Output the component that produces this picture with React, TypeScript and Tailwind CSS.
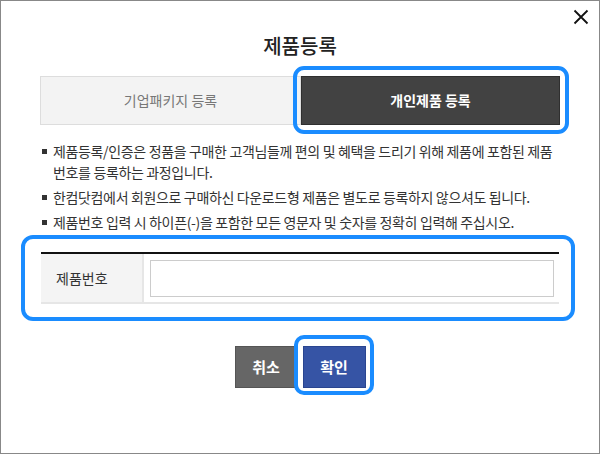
import React from "react";

const notes = [
  <>
    제품등록/인증은 정품을 구매한 고객님들께 편의 및 혜택을 드리기 위해 제품에 포함된 제품
    <br />
    번호를 등록하는 과정입니다.
  </>,
  <>한컴닷컴에서 회원으로 구매하신 다운로드형 제품은 별도로 등록하지 않으셔도 됩니다.</>,
  <>제품번호 입력 시 하이픈(-)을 포함한 모든 영문자 및 숫자를 정확히 입력해 주십시오.</>,
];

export default function App() {
  return (
    <div
      className="relative w-[600px] h-[454px] border border-[#888] bg-white text-[#333]"
      style={{ fontFamily: '"Noto Sans CJK KR", "Noto Sans", sans-serif' }}
    >
      {/* close */}
      <button className="absolute top-[7px] right-[9px] w-[18px] h-[18px] flex items-center justify-center">
        <svg viewBox="0 0 16 16" className="w-[16px] h-[16px]" stroke="#111" strokeWidth="1.8" fill="none">
          <path d="M1.5 1.5 L14.5 14.5 M14.5 1.5 L1.5 14.5" />
        </svg>
      </button>

      <h1 className="pt-[33px] text-center text-[20px] leading-[24px] font-medium text-[#222]">제품등록</h1>

      {/* tabs */}
      <div className="mt-[18px] px-[39px] flex">
        <button className="w-[261px] h-[49px] border border-[#ddd] bg-[#f3f3f3] text-[14px] text-[#777]">
          기업패키지 등록
        </button>
        <div className="relative">
          <button className="w-[259px] h-[49px] border border-[#2f2f2f] bg-[#424242] text-[14px] font-bold text-white">
            개인제품 등록
          </button>
          <span className="pointer-events-none absolute -left-[8px] -right-[9px] -top-[10px] -bottom-[9px] border-[4px] border-[#1a8cff] rounded-[11px]" />
        </div>
      </div>

      {/* notes */}
      <ul className="mt-[16px] pl-[41px] pr-[20px] flex flex-col gap-[4px] text-[14px] leading-[21px] tracking-[-0.35px] text-[#333]">
        {notes.map((n, i) => (
          <li key={i} className="flex">
            <span className="mt-[8px] mr-[6px] w-[5px] h-[5px] bg-[#333] shrink-0" />
            <span className="whitespace-nowrap">{n}</span>
          </li>
        ))}
      </ul>

      {/* product number */}
      <div className="relative mt-[19px] mx-[40px] border-t-2 border-[#111] border-b-2 border-b-[#e6e6e6]">
        <div className="flex h-[48px]">
          <div className="w-[103px] bg-[#f4f4f4] border-r-2 border-[#e6e6e6] flex items-center pl-[15px] text-[14px] text-[#333]">
            제품번호
          </div>
          <div className="flex-1 flex items-center pl-[6px] pr-[5px]">
            <input className="w-full h-[37px] border border-[#ccc] bg-white outline-none px-2 text-[14px]" />
          </div>
        </div>
        <span className="pointer-events-none absolute -left-[20px] -right-[16px] -top-[19px] -bottom-[19px] border-[4px] border-[#1a8cff] rounded-[12px]" />
      </div>

      {/* buttons */}
      <div className="mt-[42px] flex justify-center gap-[5px]">
        <button className="w-[63px] h-[42px] bg-[#666] border border-[#555] text-white text-[15px] font-bold">취소</button>
        <div className="relative">
          <button className="w-[63px] h-[42px] bg-[#3654a5] border border-[#2a4590] text-white text-[15px] font-bold">
            확인
          </button>
          <span className="pointer-events-none absolute -left-[9px] -right-[8px] -top-[11px] -bottom-[7px] border-[4px] border-[#1a8cff] rounded-[10px]" />
        </div>
      </div>
    </div>
  );
}
